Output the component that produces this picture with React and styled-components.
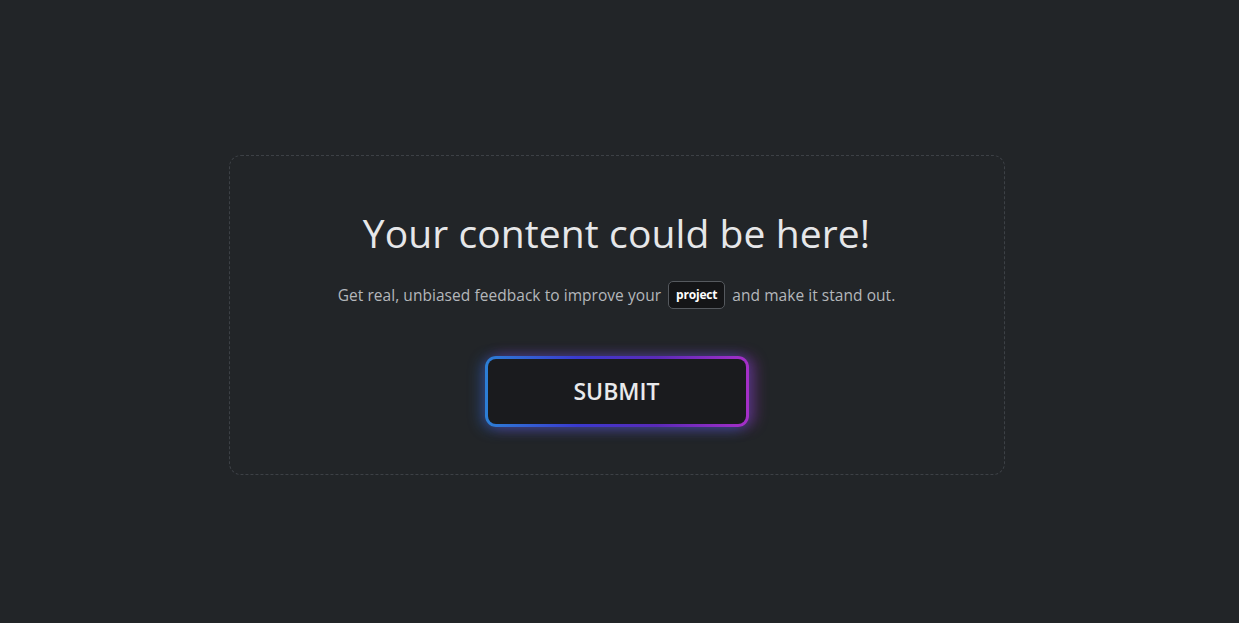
import React from 'react';
import styled, { createGlobalStyle } from 'styled-components';

const GlobalStyle = createGlobalStyle`
  html, body {
    margin: 0;
    padding: 0;
    background: #222528;
  }
  body {
    font-family: 'Open Sans', 'Noto Sans', sans-serif;
  }
`;

const Page = styled.div`
  min-height: 100vh;
  display: flex;
  align-items: center;
  justify-content: center;
  box-sizing: border-box;
`;

const Card = styled.div`
  width: 776px;
  height: 320px;
  box-sizing: border-box;
  border: 1.5px dashed #3d4146;
  border-radius: 12px;
  display: flex;
  flex-direction: column;
  align-items: center;
  padding-top: 50px;
  margin-left: -6px;
  margin-top: 6px;
`;

const Title = styled.h1`
  margin: 0;
  font-size: 39px;
  font-weight: 400;
  color: #e6e7e9;
  letter-spacing: 0.1px;
`;

const Subtitle = styled.p`
  margin: 22px 0 0;
  font-size: 15.5px;
  color: #b4b7bb;
  display: flex;
  align-items: center;
  gap: 7px;
  letter-spacing: 0.05px;
`;

const Badge = styled.span`
  background: #141517;
  border: 1px solid #55595e;
  border-radius: 5px;
  color: #ffffff;
  font-weight: 700;
  font-size: 12px;
  letter-spacing: -0.2px;
  padding: 4px 7px 5px;
`;

const GlowFrame = styled.div`
  margin-top: 47px;
  padding: 3px;
  border-radius: 11px;
  background: linear-gradient(90deg, #2c7fd6 0%, #3a3ad0 35%, #5a2ab8 65%, #a62fc8 100%);
  box-shadow: -4px 2px 14px rgba(44, 110, 220, 0.45), 6px 0 14px rgba(160, 50, 200, 0.45);
`;

const SubmitButton = styled.button`
  width: 258px;
  height: 65px;
  border: none;
  border-radius: 8px;
  background: #1a1b1e;
  color: #e9eaec;
  font-family: 'Open Sans', 'Noto Sans', sans-serif;
  font-size: 23px;
  font-weight: 600;
  letter-spacing: 0;
  cursor: pointer;
`;

export default function App() {
  return (
    <>
      <GlobalStyle />
      <Page>
        <Card>
          <Title>Your content could be here!</Title>
          <Subtitle>
            Get real, unbiased feedback to improve your <Badge>project</Badge> and make it stand out.
          </Subtitle>
          <GlowFrame>
            <SubmitButton>SUBMIT</SubmitButton>
          </GlowFrame>
        </Card>
      </Page>
    </>
  );
}
